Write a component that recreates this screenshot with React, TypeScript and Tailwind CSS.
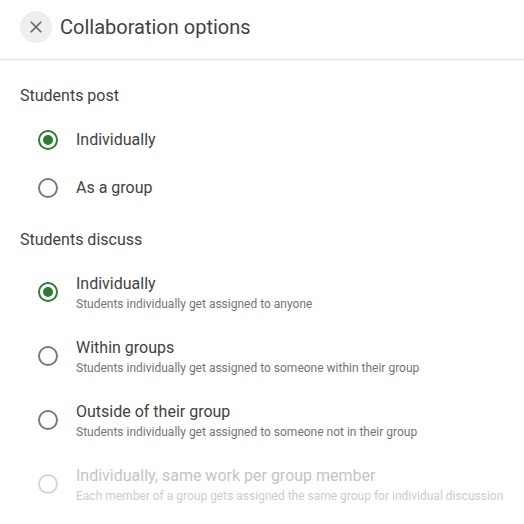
import React, { useState } from 'react';

type Option = {
  id: string;
  label: string;
  hint?: string;
  disabled?: boolean;
};

const POST_OPTIONS: Option[] = [
  { id: 'individual', label: 'Individually' },
  { id: 'group', label: 'As a group' },
];

const DISCUSS_OPTIONS: Option[] = [
  { id: 'individual', label: 'Individually', hint: 'Students individually get assigned to anyone' },
  { id: 'within', label: 'Within groups', hint: 'Students individually get assigned to someone within their group' },
  { id: 'outside', label: 'Outside of their group', hint: 'Students individually get assigned to someone not in their group' },
  {
    id: 'same',
    label: 'Individually, same work per group member',
    hint: 'Each member of a group gets assigned the same group for individual discussion',
    disabled: true,
  },
];

const Radio: React.FC<{ checked: boolean; disabled?: boolean }> = ({ checked, disabled }) => {
  const ring = disabled ? 'border-[#d6d6d6]' : checked ? 'border-[#2e7d32]' : 'border-[#7a7a7a]';
  return (
    <span className={`w-5 h-5 rounded-full border-2 ${ring} flex items-center justify-center shrink-0`}>
      {checked && <span className="w-2.5 h-2.5 rounded-full bg-[#2e7d32]" />}
    </span>
  );
};

export default function App() {
  const [post, setPost] = useState('individual');
  const [discuss, setDiscuss] = useState('individual');

  return (
    <div className="w-[524px] h-[524px] bg-white overflow-hidden text-[#424242]" style={{ fontFamily: 'Roboto, "Liberation Sans", sans-serif' }}>
      <div className="h-[60px] flex items-center gap-2 px-5 pb-[6px] border-b border-[#e0e0e0]">
        <button className="w-8 h-8 rounded-full bg-[#eeeeee] flex items-center justify-center">
          <svg width="20" height="20" viewBox="0 0 24 24" fill="#6b6b6b">
            <path d="M19 6.41 17.59 5 12 10.59 6.41 5 5 6.41 10.59 12 5 17.59 6.41 19 12 13.41 17.59 19 19 17.59 13.41 12z" />
          </svg>
        </button>
        <h1 className="text-[20px] leading-7">Collaboration options</h1>
      </div>

      <div className="px-5 pt-6">
        <div className="text-base leading-6">Students post</div>
        <div className="mt-2 flex flex-col">
          {POST_OPTIONS.map((o) => (
            <label key={o.id} onClick={() => setPost(o.id)} className="h-12 flex items-center gap-[18px] pl-[18px] cursor-pointer">
              <Radio checked={post === o.id} />
              <span className="text-base leading-6">{o.label}</span>
            </label>
          ))}
        </div>

        <div className="mt-[16px] text-base leading-6">Students discuss</div>
        <div className="mt-[8px] flex flex-col">
          {DISCUSS_OPTIONS.map((o) => (
            <label
              key={o.id}
              onClick={() => !o.disabled && setDiscuss(o.id)}
              className="h-16 flex items-center gap-[18px] pl-[18px] cursor-pointer"
            >
              <Radio checked={discuss === o.id} disabled={o.disabled} />
              <span className="flex flex-col">
                <span className={`text-base leading-6 ${o.disabled ? 'text-[#c4c4c4]' : ''}`}>{o.label}</span>
                <span className={`text-xs leading-4 ${o.disabled ? 'text-[#cccccc]' : 'text-[#757575]'}`}>{o.hint}</span>
              </span>
            </label>
          ))}
        </div>
      </div>
    </div>
  );
}
